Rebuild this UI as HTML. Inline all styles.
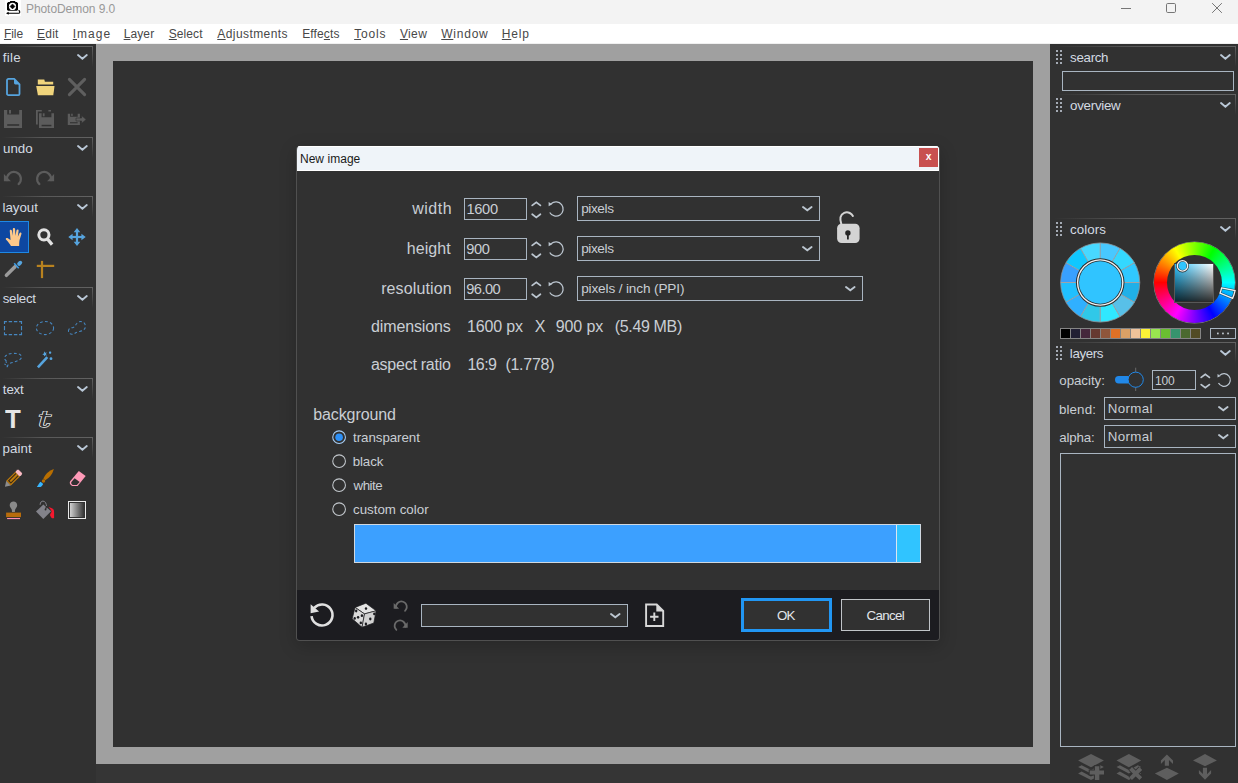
<!DOCTYPE html>
<html lang="en"><head><meta charset="utf-8"><title>PhotoDemon 9.0</title>
<style>
*{box-sizing:border-box;margin:0;padding:0}
html,body{width:1238px;height:783px;overflow:hidden;background:#313131}
body{font-family:'Liberation Sans',sans-serif}
#app{position:relative;width:1238px;height:783px;overflow:hidden;background:#313131}
.a{position:absolute}
.t{position:absolute;white-space:pre;line-height:1}
svg{position:absolute;overflow:visible}
.hd{position:absolute;height:21px;background:linear-gradient(90deg,rgba(96,96,96,0),#585858 45%,#626262) top/100% 1px no-repeat}
.hd:after{content:"";position:absolute;right:0;top:0;width:1px;height:21px;background:linear-gradient(#626262,rgba(98,98,98,0))}
.box{position:absolute;border:1px solid #a9b5c1;background:#313131}
u{text-decoration:underline;text-underline-offset:1px;text-decoration-thickness:1px}

</style></head>
<body>
<div id="app">
<div class="a" style="left:0;top:0;width:1238px;height:24px;background:#f3f3f3"></div><div class="a" style="left:0;top:24px;width:1238px;height:20px;background:#fff;border-bottom:1px solid #f0f0f0"></div><svg style="left:5px;top:0" width="16" height="16" viewBox="0 0 16 16"><rect width="16" height="16" fill="#fff"/>
<path d="M5.300 .9h4.700l.5 1.100h1.600l.4 1h.5v6.800l-.9.900H2.900L2 9.800V3h.5l.4-1h1.900z" fill="#000"/><circle cx="7.500" cy="6.400" r="3.600" fill="#fff"/><path d="M7.500 3.900l2.500 2.500-2.500 2.500L5 6.400z" fill="#000" stroke="#000" stroke-width=".5" stroke-linejoin="round"/>
<path d="M2.400 13.300h11c1.700 0 1.900-1.900.2-3" fill="none" stroke="#000" stroke-width="1.100"/><path d="M3.700 11.800L1 13.300l2.700 1.500z" fill="#000"/></svg><svg style="left:1116px;top:0" width="112" height="16" viewBox="0 0 112 16" fill="none" stroke="#767676" stroke-width="1"><path d="M5 8.500h10"/><rect x="50.500" y="3.500" width="9" height="9" rx="1.200"/><path d="M96.500 3.500l9 9M105.500 3.500l-9 9" stroke-linecap="square"/></svg><div class="a" style="left:96px;top:44px;width:954px;height:720px;background:#a0a0a0"></div><div class="a" style="left:113px;top:61px;width:920px;height:686px;background:#313131"></div><div class="a" style="left:96px;top:764px;width:954px;height:19px;background:#353535"></div><div class="hd" style="left:2px;top:46px;width:91px"></div><svg style="left:77px;top:54.3px" width="10.8" height="5.7" viewBox="0 0 10.8 5.7" fill="none" stroke="#b9c7d6" stroke-width="1.9" stroke-linecap="round" stroke-linejoin="miter"><path d="M1 1l4.4 3.7l4.4 -3.7"/></svg><div class="hd" style="left:2px;top:137px;width:91px"></div><svg style="left:77px;top:145.3px" width="10.8" height="5.7" viewBox="0 0 10.8 5.7" fill="none" stroke="#b9c7d6" stroke-width="1.9" stroke-linecap="round" stroke-linejoin="miter"><path d="M1 1l4.4 3.7l4.4 -3.7"/></svg><div class="hd" style="left:2px;top:196px;width:91px"></div><svg style="left:77px;top:204.3px" width="10.8" height="5.7" viewBox="0 0 10.8 5.7" fill="none" stroke="#b9c7d6" stroke-width="1.9" stroke-linecap="round" stroke-linejoin="miter"><path d="M1 1l4.4 3.7l4.4 -3.7"/></svg><div class="hd" style="left:2px;top:287px;width:91px"></div><svg style="left:77px;top:295.3px" width="10.8" height="5.7" viewBox="0 0 10.8 5.7" fill="none" stroke="#b9c7d6" stroke-width="1.9" stroke-linecap="round" stroke-linejoin="miter"><path d="M1 1l4.4 3.7l4.4 -3.7"/></svg><div class="hd" style="left:2px;top:378px;width:91px"></div><svg style="left:77px;top:386.3px" width="10.8" height="5.7" viewBox="0 0 10.8 5.7" fill="none" stroke="#b9c7d6" stroke-width="1.9" stroke-linecap="round" stroke-linejoin="miter"><path d="M1 1l4.4 3.7l4.4 -3.7"/></svg><div class="hd" style="left:2px;top:437px;width:91px"></div><svg style="left:77px;top:445.3px" width="10.8" height="5.7" viewBox="0 0 10.8 5.7" fill="none" stroke="#b9c7d6" stroke-width="1.9" stroke-linecap="round" stroke-linejoin="miter"><path d="M1 1l4.4 3.7l4.4 -3.7"/></svg><svg style="left:4px;top:76px" width="20" height="22" viewBox="0 0 20 22" ><path d="M4.4 2.9h5.8l5.3 5.4v9.6a1.2 1.2 0 0 1-1.2 1.2H4.4a1.4 1.4 0 0 1-1.4-1.4V4.3a1.4 1.4 0 0 1 1.4-1.4z" fill="none" stroke="#56a4de" stroke-width="1.8" stroke-linejoin="round"/><path d="M10 2.9l5.6 5.6h-4.2a1.4 1.4 0 0 1-1.4-1.4z" fill="#56a4de"/></svg><svg style="left:35px;top:78px" width="22" height="19" viewBox="0 0 22 19" ><path d="M2.8 1.6h6.5l.6 2.1h8.3v2.9H2.8z" fill="#f0d47c"/><path d="M1.2 7.9h18.3l-1.2 9.3H2.9z" fill="#f0d47c"/></svg><svg style="left:66px;top:76px" width="22" height="22" viewBox="0 0 22 22" ><path d="M3.400 3.400l15.200 15.200M18.600 3.400L3.400 18.600" stroke="#5f5f5f" stroke-width="3.100" stroke-linecap="round" fill="none"/></svg><svg style="left:4px;top:110px" width="18" height="18" viewBox="0 0 18 18" ><path d="M0 0h3.2v4.6h12V0H18v18H0z" fill="#5c5c5c"/><rect x="5" y="0" width="2" height="3.6" fill="#5c5c5c"/><rect x="3.2" y="14.2" width="12" height="1.6" fill="#313131"/></svg><svg style="left:36px;top:110px" width="18" height="18" viewBox="0 0 18 18" ><path d="M0 0h5.8v1.5H1.8v13H0z" fill="#5c5c5c"/><rect x="12.4" y="0" width="2.6" height="1.5" fill="#5c5c5c"/><path d="M3 3.3h2.6v4h9.8v-4H18V18H3z" fill="#5c5c5c"/><rect x="6.8" y="3.3" width="1.8" height="3" fill="#5c5c5c"/><rect x="5.6" y="14.8" width="9.8" height="1.5" fill="#313131"/></svg><svg style="left:67px;top:113px" width="20" height="13" viewBox="0 0 20 13" ><path d="M.8.7h2.3v3h7.6v-3h2.2v11.3H.8z" fill="#5c5c5c"/><rect x="4.2" y=".7" width="1.5" height="2.2" fill="#5c5c5c"/><rect x="3" y="9.2" width="7.6" height="1.1" fill="#313131"/><path d="M9 5h5.6V2.6l4.6 3.9-4.6 3.9V8H9z" fill="#5c5c5c" stroke="#313131" stroke-width=".6"/></svg><svg style="left:3px;top:170px" width="20" height="16" viewBox="0 0 20 16" ><path d="M4 10.100A7 7 0 1 1 15.600 14.100" fill="none" stroke="#5c5c5c" stroke-width="2.200" stroke-linecap="round"/><path d="M.9 3.900V11.300H7.900z" fill="#5c5c5c"/></svg><svg style="left:35.1px;top:170px" width="20" height="16" viewBox="0 0 20 16" ><g transform="translate(20,0) scale(-1,1)"><path d="M4 10.100A7 7 0 1 1 15.600 14.100" fill="none" stroke="#5c5c5c" stroke-width="2.200" stroke-linecap="round"/><path d="M.9 3.900V11.300H7.900z" fill="#5c5c5c"/></g></svg><div class="a" style="left:-3px;top:221px;width:32px;height:32px;background:#0d47a1;border:1px solid #1e88e5"></div><svg style="left:5px;top:227px" width="18" height="20" viewBox="0 0 18 20" ><path transform="translate(.3,0) scale(1.090,1)" d="M5.2 19c-1-1.6-2.4-4.2-4.6-6.400c-.7-1 .6-1.900 1.700-1.300l2.500 1.800L4.100 4.100c-.2-1.500 1.700-1.800 2-.3l.9 4.900-.1-6.500c0-1.500 2-1.500 2.100 0l.3 6.500 1-5.400c.3-1.400 2.100-1.100 1.900.4l-.7 6.100 1.500-3.600c.6-1.300 2.200-.6 1.800.7l-1.700 6.200c-.3 1.400-.3 3.400-.4 5.900z" fill="#fdc88a"/></svg><svg style="left:36px;top:227px" width="20" height="20" viewBox="0 0 20 20" ><circle cx="7.900" cy="7.800" r="5.100" fill="none" stroke="#e2e2e2" stroke-width="3"/><path d="M11.300 11.800l4.800 5.800" stroke="#e2e2e2" stroke-width="3.300" stroke-linecap="butt"/></svg><svg style="left:68px;top:227px" width="18" height="20" viewBox="0 0 18 20" ><g fill="#56a4de"><rect x="7.900" y="4" width="2.200" height="12"/><rect x="3" y="8.900" width="12" height="2.200"/><path d="M9 1l3.300 4.300H5.700zM9 19l3.300-4.300H5.700zM.3 10l4.300-3.300v6.600zM17.700 10l-4.300-3.300v6.600z"/></g></svg><svg style="left:4px;top:260px" width="19" height="18" viewBox="0 0 19 18" ><path d="M2.400 15.300L11 6.700" stroke="#9b9b9b" stroke-width="3.500" stroke-linecap="round"/><path d="M10.200 3.300l4.500 5" stroke="#3f9fe8" stroke-width="1.500"/><path d="M15.100 3.900l1.200-1.200" stroke="#56a4de" stroke-width="3.800" stroke-linecap="round"/></svg><svg style="left:36px;top:260px" width="19" height="19" viewBox="0 0 19 19" ><rect x="4.900" y=".9" width="2.200" height="17.200" fill="#b8821f"/><rect x=".8" y="4.800" width="17.400" height="2.200" fill="#b8821f"/></svg><svg style="left:3px;top:320px" width="20" height="16" viewBox="0 0 20 16" ><path d="M1.500 4V1.600H3.900M5.700 1.600h3.400M10.900 1.600h3.400M16.100 1.600H18.500V4M18.500 5.900v4.400M18.500 12.200V14.600H16.100M14.300 14.600h-3.400M9.100 14.600H5.700M3.900 14.600H1.500V12.200M1.500 10.300V5.900" fill="none" stroke="#4687c0" stroke-width="1.150"/></svg><svg style="left:35px;top:320px" width="20" height="16" viewBox="0 0 20 16" ><ellipse cx="10" cy="8" rx="8.600" ry="6.600" fill="none" stroke="#4687c0" stroke-width="1.050" stroke-dasharray="2.800 2.300"/></svg><svg style="left:67px;top:320px" width="20" height="16" viewBox="0 0 20 16" ><path d="M2 9.200c-1.500 2.400 0 5.200 3.300 5 2.600-.2 3.600-2.300 7.200-2.800 4.400-.6 6.700-3.300 5.700-6.600C17.200 1.800 13.300.3 10.600 2.600 8.400 4.500 8.600 6.600 6.200 7.400 4.400 8 3 7.700 2 9.200z" fill="none" stroke="#4687c0" stroke-width="1.050" stroke-dasharray="2.800 2.200"/></svg><svg style="left:3px;top:352px" width="20" height="16" viewBox="0 0 20 16" ><path d="M3.600 9.200C-.5 6.500 1.800 1.800 9.600 1.400c5.600-.3 9.600 1.300 8.800 4.200-.8 2.800-6 4-10 5.200-2.600.9-4.200 2.600-4.300 4.800" fill="none" stroke="#4687c0" stroke-width="1.050" stroke-dasharray="2.800 2.200"/><path d="M1.500 11.800l3.400 2.800M2.600 9.600l2.200 1.800" stroke="#4687c0" stroke-width="1.100" stroke-dasharray="1.600 1.200" fill="none"/></svg><svg style="left:36px;top:350px" width="18" height="20" viewBox="0 0 18 20" ><path d="M1.900 17.400L11.300 7.100" stroke="#56a4de" stroke-width="2.600"/><path d="M8.300 1.300l.8 1.500 1.700-.3-.9 1.500 1 1.400-1.700-.2-1 1.400-.3-1.700-1.600-.5 1.500-.8z" fill="#56a4de"/><rect x="13" y="1.500" width="2.200" height="2.200" rx=".6" fill="#56a4de"/><circle cx="15" cy="8.700" r="1.400" fill="#56a4de"/></svg><span class="t" style="left:5.100px;top:406.700px;font-size:24.900px;font-weight:700;color:#e6e6e6;transform-origin:0 0;transform:scaleX(1.040)">T</span><span class="t" style="left:38.300px;top:409.200px;font-family:'DejaVu Serif',serif;font-style:italic;font-size:21.500px;color:#313131;-webkit-text-stroke:1.250px #ececec;paint-order:stroke fill;transform-origin:0 0;transform:scaleX(1.500)">t</span><svg style="left:4px;top:469px" width="19" height="19" viewBox="0 0 19 19" ><g transform="translate(4.600,14.100) rotate(-45)"><path d="M0-3.300V3.300L-5.200 0z" fill="#8c8c8c"/><rect x="0" y="-3.300" width="12.800" height="6.600" fill="#c07c0c"/><rect x="1.100" y="-2.150" width="11" height="4.300" fill="#3a2c18"/><rect x="2.300" y="-.95" width="9.800" height="1.900" fill="#c07c0c"/><rect x="12.500" y="-3.300" width="4.100" height="6.600" rx="1.300" fill="#f7b4be"/><path d="M13.700-3.300v6.600M15-3.300v6.600" stroke="#fbd0d6" stroke-width=".5"/></g></svg><svg style="left:36px;top:468px" width="19" height="20" viewBox="0 0 19 20" ><path d="M17.900 1Q10.400 3.700 7.300 10.500L9.200 12.300Q15.800 8.600 17.900 1z" fill="#b86e00"/><circle cx="7.500" cy="13" r="1.700" fill="#b86e00"/><path d="M4.600 13.800L7.200 15.900C6.500 17.500 5.200 18.700 4.300 18.900H.8C2.100 17.500 3 15 4.600 13.800z" fill="#38b6ff"/></svg><svg style="left:68px;top:469px" width="19" height="19" viewBox="0 0 19 19" ><path d="M10.800 1.900L17.700 7 9.600 17H5.200C2.800 17 .7 14 2.400 11.900z" fill="#ff9ab8"/><path d="M6.600 9.300l5.100 3.800-2.800 3H5.500c-1.700 0-3-2-1.900-3.300z" fill="#313131"/></svg><svg style="left:5px;top:500px" width="18" height="20" viewBox="0 0 18 20" ><path d="M8.500 1.600c2.100 0 3.700 1.600 3.700 3.600 0 1.700-1.400 2.700-2 4.400-.2.700-.3 1.500-.3 2.300H7c0-.8-.1-1.600-.3-2.300-.6-1.700-2-2.700-2-4.400 0-2 1.700-3.600 3.800-3.600z" fill="#8a8a8a"/><rect x="1.100" y="12.600" width="14.900" height="4.500" fill="#b86c0c"/><rect x="2.100" y="18" width="12.900" height="1.100" fill="#ff8fb4"/></svg><svg style="left:35px;top:500px" width="20" height="20" viewBox="0 0 20 20" ><path d="M8.300 4.500L16.100 11.300 8.300 19.100 1 11.600z" fill="#82828a"/><path d="M5.100 4.800C5.200 2 6.800 1.100 8 1.100c2.500.1 3.300 2.700 3.600 5.200" fill="none" stroke="#82828a" stroke-width="1"/><path d="M11.600 6l-1 3.500" stroke="#2c2c2c" stroke-width="1.100"/><circle cx="10.500" cy="9.500" r=".9" fill="#2c2c2c"/><path d="M13.600 7C15.500 7.600 17.300 8.200 18.300 9.300 19.200 10.300 19.100 12 19.100 13V17.900C18.300 18.200 17.400 18.200 16.600 17.900 16.200 17.100 15.400 16.400 15.100 15.600 14.800 14.300 16.400 13 16.600 11.600 16.300 10 14.600 8.400 13.600 7z" fill="#f5182e"/></svg><div class="a" style="left:68px;top:501px;width:18px;height:18px;border:1.5px solid #e8e8e8;padding:1px;background:#313131"><div style="width:100%;height:100%;background:linear-gradient(90deg,#d0d0d0,#343434)"></div></div><div class="hd" style="left:1054px;top:46px;width:182px"></div><svg style="left:1056px;top:50px" width="6" height="14" viewBox="0 0 6 14" fill="#a4aab4" shape-rendering="crispEdges"><rect x="0" y="0" width="2" height="2"/><rect x="0" y="4" width="2" height="2"/><rect x="0" y="8" width="2" height="2"/><rect x="0" y="12" width="2" height="2"/><rect x="4" y="0" width="2" height="2"/><rect x="4" y="4" width="2" height="2"/><rect x="4" y="8" width="2" height="2"/><rect x="4" y="12" width="2" height="2"/></svg><svg style="left:1220px;top:54.3px" width="10.8" height="5.7" viewBox="0 0 10.8 5.7" fill="none" stroke="#b9c7d6" stroke-width="1.9" stroke-linecap="round" stroke-linejoin="miter"><path d="M1 1l4.4 3.7l4.4 -3.7"/></svg><div class="box" style="left:1062px;top:71px;width:172px;height:20px"></div><div class="hd" style="left:1054px;top:94px;width:182px"></div><svg style="left:1056px;top:98px" width="6" height="14" viewBox="0 0 6 14" fill="#a4aab4" shape-rendering="crispEdges"><rect x="0" y="0" width="2" height="2"/><rect x="0" y="4" width="2" height="2"/><rect x="0" y="8" width="2" height="2"/><rect x="0" y="12" width="2" height="2"/><rect x="4" y="0" width="2" height="2"/><rect x="4" y="4" width="2" height="2"/><rect x="4" y="8" width="2" height="2"/><rect x="4" y="12" width="2" height="2"/></svg><svg style="left:1220px;top:102.3px" width="10.8" height="5.7" viewBox="0 0 10.8 5.7" fill="none" stroke="#b9c7d6" stroke-width="1.9" stroke-linecap="round" stroke-linejoin="miter"><path d="M1 1l4.4 3.7l4.4 -3.7"/></svg><div class="hd" style="left:1054px;top:218px;width:182px"></div><svg style="left:1056px;top:222px" width="6" height="14" viewBox="0 0 6 14" fill="#a4aab4" shape-rendering="crispEdges"><rect x="0" y="0" width="2" height="2"/><rect x="0" y="4" width="2" height="2"/><rect x="0" y="8" width="2" height="2"/><rect x="0" y="12" width="2" height="2"/><rect x="4" y="0" width="2" height="2"/><rect x="4" y="4" width="2" height="2"/><rect x="4" y="8" width="2" height="2"/><rect x="4" y="12" width="2" height="2"/></svg><svg style="left:1220px;top:226.3px" width="10.8" height="5.7" viewBox="0 0 10.8 5.7" fill="none" stroke="#b9c7d6" stroke-width="1.9" stroke-linecap="round" stroke-linejoin="miter"><path d="M1 1l4.4 3.7l4.4 -3.7"/></svg><div class="hd" style="left:1054px;top:342px;width:182px"></div><svg style="left:1056px;top:346px" width="6" height="14" viewBox="0 0 6 14" fill="#a4aab4" shape-rendering="crispEdges"><rect x="0" y="0" width="2" height="2"/><rect x="0" y="4" width="2" height="2"/><rect x="0" y="8" width="2" height="2"/><rect x="0" y="12" width="2" height="2"/><rect x="4" y="0" width="2" height="2"/><rect x="4" y="4" width="2" height="2"/><rect x="4" y="8" width="2" height="2"/><rect x="4" y="12" width="2" height="2"/></svg><svg style="left:1220px;top:350.3px" width="10.8" height="5.7" viewBox="0 0 10.8 5.7" fill="none" stroke="#b9c7d6" stroke-width="1.9" stroke-linecap="round" stroke-linejoin="miter"><path d="M1 1l4.4 3.7l4.4 -3.7"/></svg><svg style="left:1060px;top:242px" width="81" height="82" viewBox="0 0 81 82" ><path d="M40.2 40.5L40.20 0.90A39.6 39.6 0 0 1 60.00 6.21z" fill="#48c8ff"/><path d="M40.2 40.5L60.00 6.21A39.6 39.6 0 0 1 74.49 20.70z" fill="#34d8ff"/><path d="M40.2 40.5L74.49 20.70A39.6 39.6 0 0 1 79.80 40.50z" fill="#30c8ff"/><path d="M40.2 40.5L79.80 40.50A39.6 39.6 0 0 1 74.49 60.30z" fill="#20b0e8"/><path d="M40.2 40.5L74.49 60.30A39.6 39.6 0 0 1 60.00 74.79z" fill="#58c0e8"/><path d="M40.2 40.5L60.00 74.79A39.6 39.6 0 0 1 40.20 80.10z" fill="#30e8ff"/><path d="M40.2 40.5L40.20 80.10A39.6 39.6 0 0 1 20.40 74.79z" fill="#30c8e8"/><path d="M40.2 40.5L20.40 74.79A39.6 39.6 0 0 1 5.91 60.30z" fill="#30b0ff"/><path d="M40.2 40.5L5.91 60.30A39.6 39.6 0 0 1 0.60 40.50z" fill="#20c0ff"/><path d="M40.2 40.5L0.60 40.50A39.6 39.6 0 0 1 5.91 20.70z" fill="#38a0ff"/><path d="M40.2 40.5L5.91 20.70A39.6 39.6 0 0 1 20.40 6.21z" fill="#10c8ff"/><path d="M40.2 40.5L20.40 6.21A39.6 39.6 0 0 1 40.20 0.90z" fill="#48d8ff"/><path d="M40.2 40.5L40.20 0.90" stroke="#a0a4a8" stroke-width="1"/><path d="M40.2 40.5L60.00 6.21" stroke="#a0a4a8" stroke-width="1"/><path d="M40.2 40.5L74.49 20.70" stroke="#a0a4a8" stroke-width="1"/><path d="M40.2 40.5L79.80 40.50" stroke="#a0a4a8" stroke-width="1"/><path d="M40.2 40.5L74.49 60.30" stroke="#a0a4a8" stroke-width="1"/><path d="M40.2 40.5L60.00 74.79" stroke="#a0a4a8" stroke-width="1"/><path d="M40.2 40.5L40.20 80.10" stroke="#a0a4a8" stroke-width="1"/><path d="M40.2 40.5L20.40 74.79" stroke="#a0a4a8" stroke-width="1"/><path d="M40.2 40.5L5.91 60.30" stroke="#a0a4a8" stroke-width="1"/><path d="M40.2 40.5L0.60 40.50" stroke="#a0a4a8" stroke-width="1"/><path d="M40.2 40.5L5.91 20.70" stroke="#a0a4a8" stroke-width="1"/><path d="M40.2 40.5L20.40 6.21" stroke="#a0a4a8" stroke-width="1"/><circle cx="40.2" cy="40.5" r="39.6" fill="none" stroke="#8a9096" stroke-width=".8"/><circle cx="40.2" cy="40.5" r="24.300" fill="#2a2a2a"/><circle cx="40.2" cy="40.5" r="23.300" fill="#f2f2f2"/><circle cx="40.2" cy="40.5" r="21.900" fill="#2a2a2a"/><circle cx="40.2" cy="40.5" r="21.200" fill="#30c4ff"/></svg><div class="a" style="left:1153.500px;top:242.200px;width:81px;height:81px;border-radius:50%;background:conic-gradient(from 270deg,#f00,#ff0,#0f0,#0ff,#00f,#f0f,#f00);box-shadow:0 0 0 .6px #888"></div><div class="a" style="left:1166.500px;top:255.200px;width:55px;height:55px;border-radius:50%;background:#313131"></div><div class="a" style="left:1174px;top:263px;width:40px;height:40px;background:#2c2c2c;border:1px solid #585858;border-top-color:#3a3a3a"></div><div class="a" style="left:1175px;top:264px;width:38px;height:37px;background:linear-gradient(rgba(0,0,0,0),rgba(0,0,0,.8)),linear-gradient(90deg,#30c4ff,#fff)"></div><svg style="left:1176px;top:259px" width="14" height="14" viewBox="0 0 14 14" ><circle cx="6.500" cy="6.900" r="5.300" fill="#30c4ff" stroke="#2a2a2a" stroke-width="2.400"/><circle cx="6.500" cy="6.900" r="5.200" fill="none" stroke="#f2f2f2" stroke-width="1.300"/></svg><svg style="left:1153.5px;top:242.2px" width="90" height="81" viewBox="0 0 90 81" ><g transform="translate(40.550,40.500)"><path d="M27.06 5.41L40.50 8.09A41.3 41.3 0 0 1 38.13 15.87L25.48 10.61A27.6 27.6 0 0 0 27.06 5.41z" fill="none" stroke="#2a2a2a" stroke-opacity=".7" stroke-width="2.500" stroke-linejoin="miter"/><path d="M27.06 5.41L40.50 8.09A41.3 41.3 0 0 1 38.13 15.87L25.48 10.61A27.6 27.6 0 0 0 27.06 5.41z" fill="none" stroke="#f2f2f2" stroke-width="1.300" stroke-linejoin="miter"/></g></svg><div class="a" style="left:1060px;top:328px;width:141px;height:11px;background:#858585"></div><div class="a" style="left:1061px;top:329px;width:9px;height:9px;background:#000000"></div><div class="a" style="left:1071px;top:329px;width:9px;height:9px;background:#222034"></div><div class="a" style="left:1081px;top:329px;width:9px;height:9px;background:#45283c"></div><div class="a" style="left:1091px;top:329px;width:9px;height:9px;background:#663931"></div><div class="a" style="left:1101px;top:329px;width:9px;height:9px;background:#8f563b"></div><div class="a" style="left:1111px;top:329px;width:9px;height:9px;background:#df7126"></div><div class="a" style="left:1121px;top:329px;width:9px;height:9px;background:#d9a066"></div><div class="a" style="left:1131px;top:329px;width:9px;height:9px;background:#eec39a"></div><div class="a" style="left:1141px;top:329px;width:9px;height:9px;background:#fbf236"></div><div class="a" style="left:1151px;top:329px;width:9px;height:9px;background:#99e550"></div><div class="a" style="left:1161px;top:329px;width:9px;height:9px;background:#6abe30"></div><div class="a" style="left:1171px;top:329px;width:9px;height:9px;background:#37946e"></div><div class="a" style="left:1181px;top:329px;width:9px;height:9px;background:#4b692f"></div><div class="a" style="left:1191px;top:329px;width:9px;height:9px;background:#524b24"></div><div class="box" style="left:1210px;top:328px;width:26px;height:11px"></div><svg style="left:1216px;top:332px" width="14" height="3" viewBox="0 0 14 3" fill="#c4ccd4"><rect x="1" y=".6" width="1.700" height="1.700"/><rect x="6.100" y=".6" width="1.700" height="1.700"/><rect x="11.200" y=".6" width="1.700" height="1.700"/></svg><svg style="left:1112px;top:366px" width="34" height="28" viewBox="0 0 34 28" ><path d="M23.700 1.700v23.300" stroke="#6a6a6a" stroke-width="1"/><path d="M6.700 13.700h14" stroke="#2188e8" stroke-width="7.400" stroke-linecap="round"/><circle cx="23.700" cy="13.700" r="7.600" fill="#313131" stroke="#2188e8" stroke-width="1"/></svg><div class="box" style="left:1152px;top:370px;width:44px;height:20px"></div><svg style="left:1199.5px;top:371.8px" width="12" height="20" viewBox="0 0 12 20" ><path d="M1.200 5.400l4.100-3.150 4.100 3.150M1.200 12.6l4.100 3.150 4.100-3.150" fill="none" stroke="#bcc6d0" stroke-width="1.750" stroke-linecap="round"/></svg><svg style="left:1214.3px;top:370.3px" width="20" height="20" viewBox="0 0 20 20" ><g transform="translate(10,10)"><path d="M-4.30 -4.61A6.3 6.3 0 1 1 -5.51 3.05" fill="none" stroke="#bcc6d0" stroke-width="1.25"/><path d="M-6.50 -6.10L-6.50 -2.40L-3.30 -4.10z" fill="#bcc6d0"/></g></svg><div class="box" style="left:1104px;top:397px;width:132px;height:23px"></div><svg style="left:1217.5px;top:405.9px" width="10.6" height="5.3" viewBox="0 0 10.6 5.3" fill="none" stroke="#bcc6d0" stroke-width="1.9" stroke-linecap="round" stroke-linejoin="miter"><path d="M1 1l4.3 3.3l4.3 -3.3"/></svg><div class="box" style="left:1104px;top:425px;width:132px;height:23px"></div><svg style="left:1217.5px;top:433.9px" width="10.6" height="5.3" viewBox="0 0 10.6 5.3" fill="none" stroke="#bcc6d0" stroke-width="1.9" stroke-linecap="round" stroke-linejoin="miter"><path d="M1 1l4.3 3.3l4.3 -3.3"/></svg><div class="box" style="left:1060px;top:453px;width:176px;height:294px"></div><svg style="left:1078px;top:754px" width="27" height="27" viewBox="0 0 27 27" ><path d="M0.10 19.40L13.00 26.00L25.90 19.40L22.38 17.60L13.00 22.40L3.62 17.60z" fill="#5e5e5e"/><path d="M0.10 13.00L13.00 19.60L25.90 13.00L22.38 11.20L13.00 16.00L3.62 11.20z" fill="#5e5e5e"/><path d="M0.10 6.60L13.00 0.00L25.90 6.60L13.00 13.20z" fill="#5e5e5e"/><path d="M16.900 12.300h4.400v4.100H26v4H21.300V26h-4.400v-5.600H11.700v-4h5.200z" fill="#5e5e5e" stroke="#313131" stroke-width="2" paint-order="stroke"/></svg><svg style="left:1116px;top:754px" width="27" height="27" viewBox="0 0 27 27" ><path d="M0.50 19.40L12.85 26.00L25.20 19.40L21.83 17.60L12.85 22.40L3.87 17.60z" fill="#5e5e5e"/><path d="M0.50 13.00L12.85 19.60L25.20 13.00L21.83 11.20L12.85 16.00L3.87 11.20z" fill="#5e5e5e"/><path d="M0.50 6.60L12.85 0.00L25.20 6.60L12.85 13.20z" fill="#5e5e5e"/><path d="M14.600 14.500l10.200 10.200M24.800 14.500L14.600 24.700" stroke="#313131" stroke-width="5.800"/><path d="M14.600 14.500l10.200 10.200M24.800 14.500L14.600 24.700" stroke="#5e5e5e" stroke-width="3.900"/></svg><svg style="left:1154px;top:754px" width="26" height="27" viewBox="0 0 26 27" ><path d="M.9 19.600L12.900 13.700 24.800 19.600 12.900 26z" fill="#5e5e5e"/><path d="M12.900.4L19 6.500V10L14.950 5.950V11.700H10.800V6L6.900 10V6.500z" fill="#5e5e5e"/></svg><svg style="left:1192px;top:754px" width="26" height="27" viewBox="0 0 26 27" ><path d="M1 6.500L13 0 24.900 6.500 13 12.200z" fill="#5e5e5e"/><path d="M13 25.700L19.100 19.600V16.100L15.050 20.150V13.700H10.900V20.100L6.900 16.100V19.600z" fill="#5e5e5e"/></svg><div class="a" style="left:296px;top:145px;width:644px;height:496px;border-radius:4px;box-shadow:0 5px 18px rgba(0,0,0,.2)"></div><div class="a" style="left:296px;top:146px;width:644px;height:495px;background:#313131;border:1px solid #505050;border-top:none;border-radius:4px;overflow:hidden"><div style="position:absolute;left:0;top:0;width:642px;height:25px;background:#eff4f9;border:1px solid #fff;border-left:none"></div><div style="position:absolute;left:0;top:444px;width:642px;height:50px;background:#1c1c20"></div></div><div class="a" style="left:919px;top:148px;width:19px;height:19px;background:#c85050"></div><div class="box" style="left:464px;top:198px;width:63px;height:22px"></div><svg style="left:530.7px;top:199.8px" width="12" height="20" viewBox="0 0 12 20" ><path d="M1.200 5.400l4.100-3.150 4.100 3.150M1.200 14.299999999999999l4.100 3.150 4.100-3.150" fill="none" stroke="#bcc6d0" stroke-width="1.750" stroke-linecap="round"/></svg><svg style="left:546.3px;top:199px" width="20" height="20" viewBox="0 0 20 20" ><g transform="translate(10,10)"><path d="M-4.88 -5.23A7.15 7.15 0 1 1 -6.25 3.47" fill="none" stroke="#bcc6d0" stroke-width="1.25"/><path d="M-7.38 -6.92L-7.38 -2.72L-3.75 -4.65z" fill="#bcc6d0"/></g></svg><div class="box" style="left:464px;top:238px;width:63px;height:22px"></div><svg style="left:530.7px;top:239.8px" width="12" height="20" viewBox="0 0 12 20" ><path d="M1.200 5.400l4.100-3.150 4.100 3.150M1.200 14.299999999999999l4.100 3.150 4.100-3.150" fill="none" stroke="#bcc6d0" stroke-width="1.750" stroke-linecap="round"/></svg><svg style="left:546.3px;top:239px" width="20" height="20" viewBox="0 0 20 20" ><g transform="translate(10,10)"><path d="M-4.88 -5.23A7.15 7.15 0 1 1 -6.25 3.47" fill="none" stroke="#bcc6d0" stroke-width="1.25"/><path d="M-7.38 -6.92L-7.38 -2.72L-3.75 -4.65z" fill="#bcc6d0"/></g></svg><div class="box" style="left:464px;top:278px;width:63px;height:22px"></div><svg style="left:530.7px;top:279.8px" width="12" height="20" viewBox="0 0 12 20" ><path d="M1.200 5.400l4.100-3.150 4.100 3.150M1.200 14.299999999999999l4.100 3.150 4.100-3.150" fill="none" stroke="#bcc6d0" stroke-width="1.750" stroke-linecap="round"/></svg><svg style="left:546.3px;top:279px" width="20" height="20" viewBox="0 0 20 20" ><g transform="translate(10,10)"><path d="M-4.88 -5.23A7.15 7.15 0 1 1 -6.25 3.47" fill="none" stroke="#bcc6d0" stroke-width="1.25"/><path d="M-7.38 -6.92L-7.38 -2.72L-3.75 -4.65z" fill="#bcc6d0"/></g></svg><div class="box" style="left:577px;top:196px;width:243px;height:25px"></div><svg style="left:801.5px;top:205.9px" width="10.6" height="5.3" viewBox="0 0 10.6 5.3" fill="none" stroke="#bcc6d0" stroke-width="1.9" stroke-linecap="round" stroke-linejoin="miter"><path d="M1 1l4.3 3.3l4.3 -3.3"/></svg><div class="box" style="left:577px;top:236px;width:243px;height:25px"></div><svg style="left:801.5px;top:245.9px" width="10.6" height="5.3" viewBox="0 0 10.6 5.3" fill="none" stroke="#bcc6d0" stroke-width="1.9" stroke-linecap="round" stroke-linejoin="miter"><path d="M1 1l4.3 3.3l4.3 -3.3"/></svg><div class="box" style="left:577px;top:276px;width:286px;height:25px"></div><svg style="left:844.5px;top:285.9px" width="10.6" height="5.3" viewBox="0 0 10.6 5.3" fill="none" stroke="#bcc6d0" stroke-width="1.9" stroke-linecap="round" stroke-linejoin="miter"><path d="M1 1l4.3 3.3l4.3 -3.3"/></svg><svg style="left:836px;top:210px" width="25" height="34" viewBox="0 0 25 34" ><rect x="1.100" y="13.800" width="22.500" height="19.200" rx="4.400" fill="#d4d4d4"/><path d="M5.400 14.500C4.600 12 3.900 9.800 4.500 7.300 5.500 3 10.200 1.200 13.700 3c1.400.7 2.500 1.700 3.200 2.900" fill="none" stroke="#d4d4d4" stroke-width="2" stroke-linecap="round"/><circle cx="11.900" cy="22.900" r="2.700" fill="#262626"/><rect x="11" y="23" width="1.800" height="6.500" rx=".5" fill="#262626"/></svg><svg style="left:332px;top:430px" width="14" height="14" viewBox="0 0 14 14" ><circle cx="7.100" cy="7.200" r="6.350" fill="none" stroke="#a6cdf4" stroke-width="1.050"/><circle cx="7.100" cy="7.200" r="3.800" fill="#2c90f8"/></svg><svg style="left:332px;top:454px" width="14" height="14" viewBox="0 0 14 14" ><circle cx="7.100" cy="7.200" r="6.350" fill="none" stroke="#c2c7cc" stroke-width="1.050"/></svg><svg style="left:332px;top:478px" width="14" height="14" viewBox="0 0 14 14" ><circle cx="7.100" cy="7.200" r="6.350" fill="none" stroke="#c2c7cc" stroke-width="1.050"/></svg><svg style="left:332px;top:502px" width="14" height="14" viewBox="0 0 14 14" ><circle cx="7.100" cy="7.200" r="6.350" fill="none" stroke="#c2c7cc" stroke-width="1.050"/></svg><div class="a" style="left:354px;top:524px;width:567px;height:39px;background:#3ca0ff;border:1px solid #d0d8e0"><div style="position:absolute;right:0;top:0;width:24px;height:37px;background:#30c4ff;border-left:1px solid #dce6f0"></div></div><svg style="left:308.3px;top:601.3px" width="28" height="28" viewBox="0 0 28 28" ><g transform="translate(14,14)"><path d="M-7.80 -7.03A10.5 10.5 0 1 1 -10.44 1.10" fill="none" stroke="#e0e0e0" stroke-width="2.600"/><path d="M-11.400 -10.800V-1.800L-2.900 -3.600z" fill="#e0e0e0"/></g></svg><svg style="left:351px;top:602px" width="27" height="27" viewBox="0 0 27 27" ><path d="M14.9 1.2L25.1 8.8L13.5 11.9L4.1 5.4z" fill="#e4e4e4" stroke="#1c1c20" stroke-width=".7" stroke-linejoin="round"/><path d="M4.1 5.4L13.5 11.9L11.0 25.3L1.2 16.7z" fill="#dadada" stroke="#1c1c20" stroke-width=".7" stroke-linejoin="round"/><path d="M13.5 11.9L25.1 8.8L22.8 21.0L11.0 25.3z" fill="#d2d2d2" stroke="#1c1c20" stroke-width=".7" stroke-linejoin="round"/><ellipse cx="15.0" cy="6.6" rx="1.200" ry="1.400" fill="#1c1c20"/><ellipse cx="5.2" cy="9.0" rx="1.200" ry="1.400" fill="#1c1c20"/><ellipse cx="10.9" cy="13.7" rx="1.200" ry="1.400" fill="#1c1c20"/><ellipse cx="7.1" cy="15.3" rx="1.200" ry="1.400" fill="#1c1c20"/><ellipse cx="3.7" cy="16.4" rx="1.200" ry="1.400" fill="#1c1c20"/><ellipse cx="9.8" cy="20.9" rx="1.200" ry="1.400" fill="#1c1c20"/><ellipse cx="23.3" cy="11.9" rx="1.200" ry="1.400" fill="#1c1c20"/><ellipse cx="19.3" cy="17.0" rx="1.200" ry="1.400" fill="#1c1c20"/><ellipse cx="14.9" cy="22.0" rx="1.200" ry="1.400" fill="#1c1c20"/></svg><svg style="left:392.6px;top:599.6px" width="16" height="12" viewBox="0 0 16 12" ><g transform="scale(.770)"><path d="M4 10.100A7 7 0 1 1 15.600 14.100" fill="none" stroke="#6a6a6a" stroke-width="2.200" stroke-linecap="round"/><path d="M.9 3.900V11.300H7.900z" fill="#6a6a6a"/></g></svg><svg style="left:392.5px;top:618.5px" width="16" height="12" viewBox="0 0 16 12" ><g transform="translate(15.400,0) scale(-.770,.770)"><path d="M4 10.100A7 7 0 1 1 15.600 14.100" fill="none" stroke="#6a6a6a" stroke-width="2.200" stroke-linecap="round"/><path d="M.9 3.900V11.300H7.900z" fill="#6a6a6a"/></g></svg><div class="box" style="left:421px;top:604px;width:207px;height:23px"></div><svg style="left:609.8px;top:612.9px" width="10.6" height="5.3" viewBox="0 0 10.6 5.3" fill="none" stroke="#bcc6d0" stroke-width="1.9" stroke-linecap="round" stroke-linejoin="miter"><path d="M1 1l4.3 3.3l4.3 -3.3"/></svg><svg style="left:644px;top:602px" width="22" height="27" viewBox="0 0 22 27" ><path d="M2.100 2.500h10.600l6.500 6.500v15H2.100z" fill="none" stroke="#d8d8d8" stroke-width="1.900" stroke-linejoin="miter"/><path d="M12.300 2.200l7.200 7.200h-7.200z" fill="#d8d8d8"/><path d="M6.100 14.700h8.400M10.300 10.500v8.400" stroke="#d8d8d8" stroke-width="1.900"/></svg><div class="a" style="left:741px;top:598px;width:91px;height:34px;border:3px solid #2196f3;background:#313131"></div><div class="a" style="left:841px;top:599px;width:89px;height:32px;border:1px solid #c0c4c8;background:#313131"></div>
<span class="t" style="left:25.94px;top:3.14px;font-size:12px;color:#999999;letter-spacing:-0.062px">PhotoDemon 9.0</span><span class="t" style="left:3.94px;top:28.14px;font-size:12px;color:#484848;letter-spacing:-0.071px"><u>F</u>ile</span><span class="t" style="left:36.94px;top:28.14px;font-size:12px;color:#484848;letter-spacing:0.261px"><u>E</u>dit</span><span class="t" style="left:72.81px;top:28.14px;font-size:12px;color:#484848;letter-spacing:0.978px"><u>I</u>mage</span><span class="t" style="left:123.64px;top:28.14px;font-size:12px;color:#484848;letter-spacing:0.129px"><u>L</u>ayer</span><span class="t" style="left:168.76px;top:28.14px;font-size:12px;color:#484848;letter-spacing:0.089px"><u>S</u>elect</span><span class="t" style="left:217.25px;top:28.14px;font-size:12px;color:#484848;letter-spacing:0.431px"><u>A</u>djustments</span><span class="t" style="left:302.14px;top:28.14px;font-size:12px;color:#484848;letter-spacing:0.143px">Effe<u>c</u>ts</span><span class="t" style="left:354.17px;top:28.14px;font-size:12px;color:#484848;letter-spacing:0.822px"><u>T</u>ools</span><span class="t" style="left:399.91px;top:28.14px;font-size:12px;color:#484848;letter-spacing:0.372px"><u>V</u>iew</span><span class="t" style="left:441.25px;top:28.14px;font-size:12px;color:#484848;letter-spacing:0.762px"><u>W</u>indow</span><span class="t" style="left:501.84px;top:28.14px;font-size:12px;color:#484848;letter-spacing:0.791px"><u>H</u>elp</span><span class="t" style="left:2.84px;top:51.02px;font-size:13.33px;color:#d3dae2;letter-spacing:0.261px">file</span><span class="t" style="left:3.06px;top:142.02px;font-size:13.33px;color:#d3dae2;letter-spacing:-0.030px">undo</span><span class="t" style="left:2.53px;top:201.02px;font-size:13.33px;color:#d3dae2;letter-spacing:-0.037px">layout</span><span class="t" style="left:2.75px;top:292.02px;font-size:13.33px;color:#d3dae2;letter-spacing:-0.312px">select</span><span class="t" style="left:2.87px;top:383.02px;font-size:13.33px;color:#d3dae2;letter-spacing:-0.176px">text</span><span class="t" style="left:2.56px;top:442.02px;font-size:13.33px;color:#d3dae2;letter-spacing:0.048px">paint</span><span class="t" style="left:1070.05px;top:51.02px;font-size:13.33px;color:#d3dae2;letter-spacing:-0.303px">search</span><span class="t" style="left:1070.08px;top:99.02px;font-size:13.33px;color:#d3dae2;letter-spacing:-0.275px">overview</span><span class="t" style="left:1070.08px;top:223.02px;font-size:13.33px;color:#d3dae2;letter-spacing:0.038px">colors</span><span class="t" style="left:1069.83px;top:347.02px;font-size:13.33px;color:#d3dae2;letter-spacing:-0.372px">layers</span><span class="t" style="left:1059.28px;top:374.02px;font-size:13.33px;color:#c9ced4;letter-spacing:-0.045px">opacity:</span><span class="t" style="left:1058.96px;top:403.02px;font-size:13.33px;color:#c9ced4;letter-spacing:0.127px">blend:</span><span class="t" style="left:1059.18px;top:431.02px;font-size:13.33px;color:#c9ced4;letter-spacing:-0.157px">alpha:</span><span class="t" style="left:1154.93px;top:375.14px;font-size:12px;color:#c9ced4;letter-spacing:-0.105px">100</span><span class="t" style="left:1107.84px;top:402.02px;font-size:13.33px;color:#c9ced4;letter-spacing:0.338px">Normal</span><span class="t" style="left:1107.84px;top:430.02px;font-size:13.33px;color:#c9ced4;letter-spacing:0.338px">Normal</span><span class="t" style="left:299.94px;top:153.14px;font-size:12px;color:#1a1a1a;letter-spacing:0.039px">New image</span><span class="t" style="left:925.67px;top:151.58px;font-size:10.3px;color:#ffffff;font-weight:700">x</span><span class="t" style="left:412.24px;top:200.76px;font-size:16px;color:#c9ced4;letter-spacing:0.502px">width</span><span class="t" style="left:406.81px;top:240.76px;font-size:16px;color:#c9ced4;letter-spacing:0.069px">height</span><span class="t" style="left:381.14px;top:280.76px;font-size:16px;color:#c9ced4;letter-spacing:0.123px">resolution</span><span class="t" style="left:371.02px;top:318.76px;font-size:16px;color:#c9ced4;letter-spacing:-0.122px">dimensions</span><span class="t" style="left:370.99px;top:356.76px;font-size:16px;color:#c9ced4;letter-spacing:-0.260px">aspect ratio</span><span class="t" style="left:466.51px;top:201.88px;font-size:14.67px;color:#c9ced4;letter-spacing:-0.359px">1600</span><span class="t" style="left:466.19px;top:241.88px;font-size:14.67px;color:#c9ced4;letter-spacing:-0.317px">900</span><span class="t" style="left:466.19px;top:281.88px;font-size:14.67px;color:#c9ced4;letter-spacing:-0.538px">96.00</span><span class="t" style="left:581.13px;top:201.79px;font-size:13.6px;color:#c9ced4;letter-spacing:-0.377px">pixels</span><span class="t" style="left:581.13px;top:241.79px;font-size:13.6px;color:#c9ced4;letter-spacing:-0.377px">pixels</span><span class="t" style="left:581.13px;top:281.79px;font-size:13.6px;color:#c9ced4;letter-spacing:-0.136px">pixels / inch (PPI)</span><span class="t" style="left:466.90px;top:318.76px;font-size:16px;color:#c9ced4;letter-spacing:-0.141px">1600 px</span><span class="t" style="left:534.72px;top:318.76px;font-size:16px;color:#c9ced4">X</span><span class="t" style="left:555.85px;top:318.76px;font-size:16px;color:#c9ced4;letter-spacing:-0.140px">900 px</span><span class="t" style="left:614.80px;top:318.76px;font-size:16px;color:#c9ced4;letter-spacing:-0.353px">(5.49 MB)</span><span class="t" style="left:467.40px;top:356.76px;font-size:16px;color:#c9ced4;letter-spacing:-0.527px">16:9</span><span class="t" style="left:505.40px;top:356.76px;font-size:16px;color:#c9ced4;letter-spacing:-0.268px">(1.778)</span><span class="t" style="left:313.17px;top:406.76px;font-size:16px;color:#c9ced4;letter-spacing:-0.086px">background</span><span class="t" style="left:353.07px;top:431.02px;font-size:13.33px;color:#c9ced4;letter-spacing:-0.063px">transparent</span><span class="t" style="left:352.76px;top:455.02px;font-size:13.33px;color:#c9ced4;letter-spacing:-0.135px">black</span><span class="t" style="left:353.51px;top:479.02px;font-size:13.33px;color:#c9ced4;letter-spacing:-0.471px">white</span><span class="t" style="left:352.98px;top:503.02px;font-size:13.33px;color:#c9ced4;letter-spacing:0.009px">custom color</span><span class="t" style="left:777.05px;top:609.02px;font-size:13.33px;color:#e2e6ea;letter-spacing:-0.792px">OK</span><span class="t" style="left:866.42px;top:609.02px;font-size:13.33px;color:#e2e6ea;letter-spacing:-0.638px">Cancel</span>
</div>
</body></html>
